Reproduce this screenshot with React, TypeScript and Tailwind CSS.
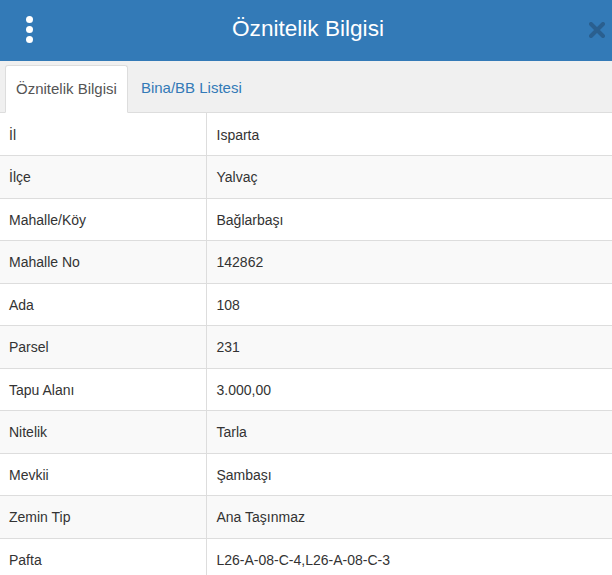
import React from 'react';

const rows: [string, string][] = [
  ['İl', 'Isparta'],
  ['İlçe', 'Yalvaç'],
  ['Mahalle/Köy', 'Bağlarbaşı'],
  ['Mahalle No', '142862'],
  ['Ada', '108'],
  ['Parsel', '231'],
  ['Tapu Alanı', '3.000,00'],
  ['Nitelik', 'Tarla'],
  ['Mevkii', 'Şambaşı'],
  ['Zemin Tip', 'Ana Taşınmaz'],
  ['Pafta', 'L26-A-08-C-4,L26-A-08-C-3'],
];

export default function App() {
  return (
    <div className="w-[612px] h-[575px] overflow-hidden bg-white text-[#333] font-['Liberation_Sans',Arial,sans-serif]">
      {/* Header */}
      <div className="relative h-[61px] bg-[#337ab7] flex items-center justify-center">
        <div className="absolute left-[26px] top-[16px] flex flex-col gap-[3px]">
          <span className="w-[7px] h-[7px] rounded-full bg-white" />
          <span className="w-[7px] h-[7px] rounded-full bg-white" />
          <span className="w-[7px] h-[7px] rounded-full bg-white" />
        </div>
        <h1 className="text-[22.6px] text-white leading-none -mt-[2px] ml-[4px]">Öznitelik Bilgisi</h1>
        <svg className="absolute left-[589px] top-[22px]" width="16" height="16" viewBox="0 0 16 16">
          <path d="M2 2 L14 14 M14 2 L2 14" stroke="#2a5f8f" strokeWidth="4" strokeLinecap="round" />
        </svg>
      </div>

      {/* Tabs */}
      <div className="h-[52px] bg-[#f0f0f0] flex items-end px-[5px] border-b border-[#ddd]">
        <div className="h-[48px] px-[10px] flex items-center bg-white border border-[#ddd] border-b-white -mb-px rounded-t-[3px] text-[15px] text-[#555]">
          Öznitelik Bilgisi
        </div>
        <div className="h-[48px] px-[13px] flex items-center text-[15px] text-[#337ab7]">
          Bina/BB Listesi
        </div>
      </div>

      {/* Table */}
      <table className="w-full border-collapse text-[14px]">
        <tbody>
          {rows.map(([k, v], i) => (
            <tr key={k} className={i % 2 === 1 ? 'bg-[#f9f9f9]' : 'bg-white'}>
              <td className="w-[206px] h-[42.5px] pl-[9px] pt-[2px] border-b border-r border-[#ddd] align-middle">{k}</td>
              <td className="h-[42.5px] pl-[10px] pt-[2px] border-b border-[#ddd] align-middle">{v}</td>
            </tr>
          ))}
        </tbody>
      </table>
    </div>
  );
}
